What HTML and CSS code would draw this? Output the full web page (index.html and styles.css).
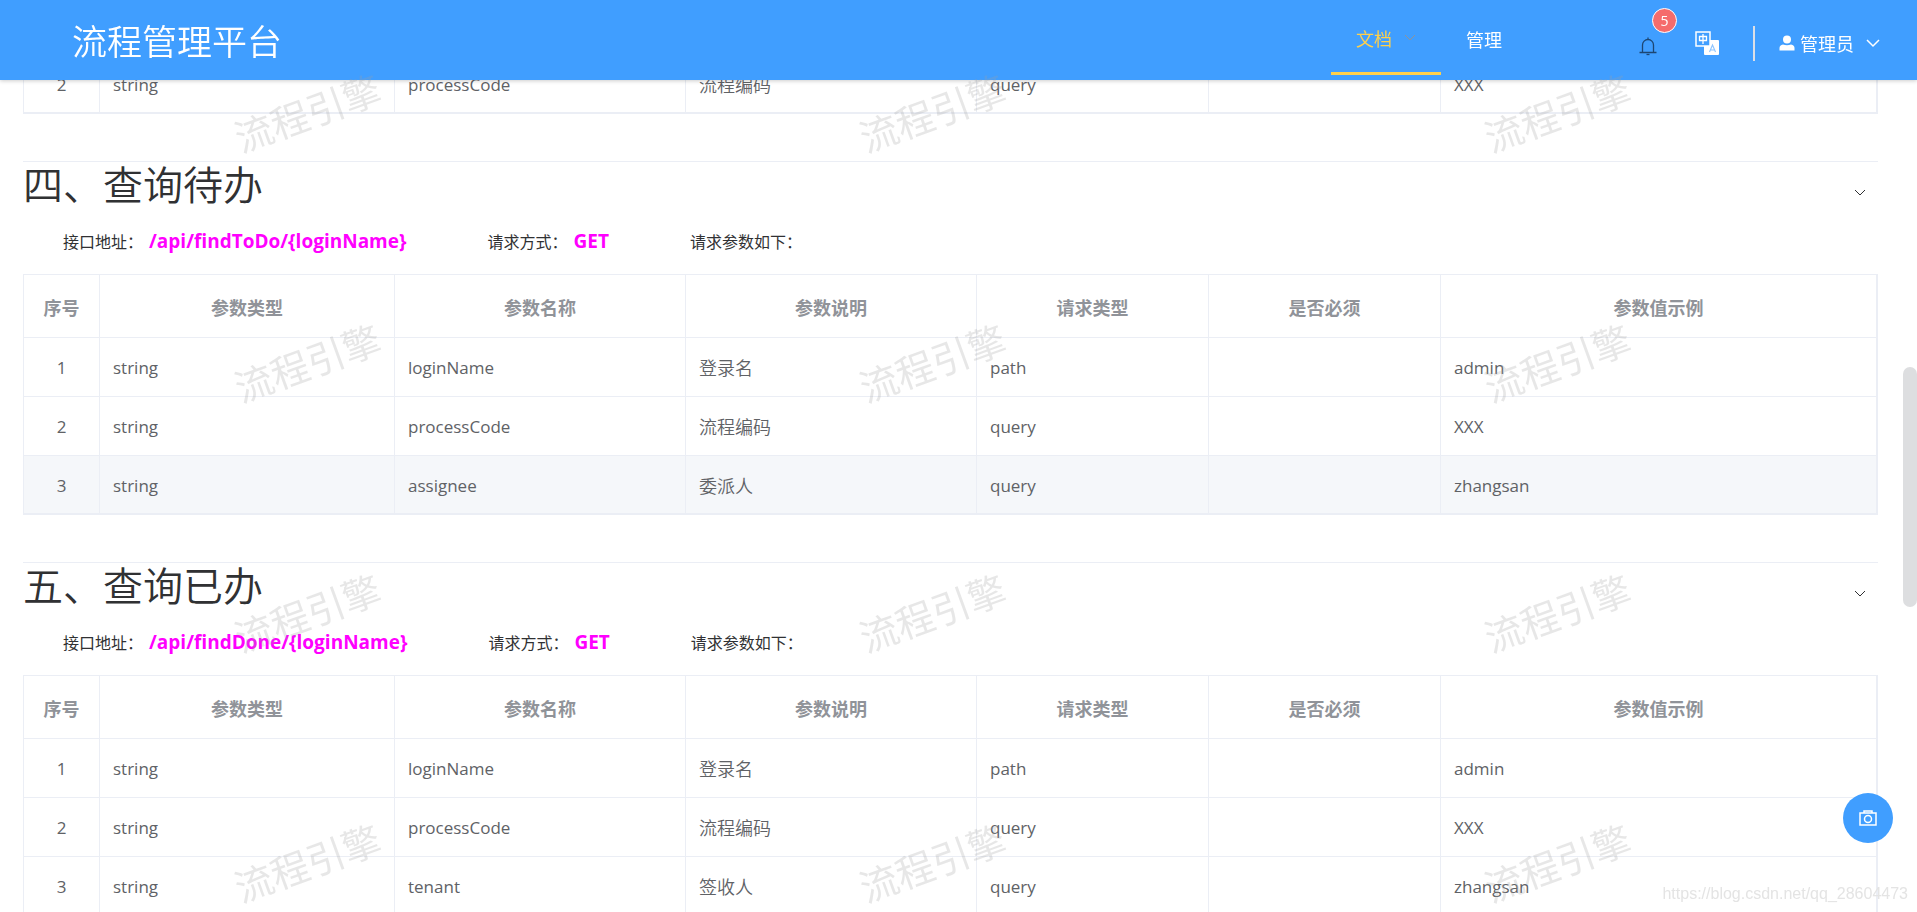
FILE: index.html
```html
<!DOCTYPE html>
<html lang="zh-CN">
<head>
<meta charset="utf-8">
<title>流程管理平台</title>
<link rel="stylesheet" href="styles.css">
</head>
<body>
<header class="topbar">
  <div class="brand">流程管理平台</div>
  <nav class="menu">
    <a class="menu-item active" href="#docs">文档
      <svg class="caret" viewBox="0 0 12 8"><path d="M1 1l5 5 5-5"/></svg>
    </a>
    <a class="menu-item" href="#manage">管理</a>
  </nav>
  <div class="tools">
    <button class="bell" aria-label="通知">
      <svg viewBox="0 0 18 20"><path d="M3.500 16V9a5.500 5.500 0 0 1 11 0v7M.5 16.500h17M9 1.500v2"/><path d="M7.500 18.500h3"/></svg>
      <span class="badge">5</span>
    </button>
    <button class="lang" aria-label="切换语言">
      <svg viewBox="0 0 24 24">
        <rect x="9" y="9" width="15" height="15" rx="1" fill="#fff"/>
        <rect x="1" y="1" width="14" height="14" fill="#409eff" stroke="#fff" stroke-width="1.500"/>
        <path d="M4.500 5.500h7v4h-7zM8 3v10" fill="none" stroke="#fff" stroke-width="1.300"/>
        <path d="M14.500 21l3-7 3 7M15.500 19h4" fill="none" stroke="#8cc4ff" stroke-width="1.100"/>
      </svg>
    </button>
    <button class="user">
      <svg class="person" viewBox="0 0 16 16"><circle cx="8" cy="4.500" r="4"/><path d="M.5 15.500v-2.500q0-3 3.500-3.500 4 1.300 8 0 3.500.5 3.500 3.500v2.500z"/></svg>
      <span>管理员</span>
      <svg class="caret light" viewBox="0 0 14 9"><path d="M1 1l6 6 6-6"/></svg>
    </button>
  </div>
</header>

<main class="page">
  <table class="params">
    <colgroup><col class="c-no"><col class="c-type"><col class="c-name"><col class="c-name"><col class="c-req"><col class="c-req"><col></colgroup>
    <tbody>
      <tr><td>2</td><td>string</td><td>processCode</td><td class="zh">流程编码</td><td>query</td><td></td><td>XXX</td></tr>
    </tbody>
  </table>

  <section class="api">
    <div class="api-head"><h2>四、查询待办</h2><button class="toggle" aria-label="折叠"><svg viewBox="0 0 12 8"><path d="M1 1l5 5 5-5"/></svg></button></div>
    <div class="info">
      <span>接口地址：<b>/api/findToDo/{loginName}</b></span>
      <span>请求方式：<b>GET</b></span>
      <span>请求参数如下：</span>
    </div>
    <table class="params">
      <colgroup><col class="c-no"><col class="c-type"><col class="c-name"><col class="c-name"><col class="c-req"><col class="c-req"><col></colgroup>
      <thead><tr><th>序号</th><th>参数类型</th><th>参数名称</th><th>参数说明</th><th>请求类型</th><th>是否必须</th><th>参数值示例</th></tr></thead>
      <tbody>
        <tr><td>1</td><td>string</td><td>loginName</td><td class="zh">登录名</td><td>path</td><td></td><td>admin</td></tr>
        <tr><td>2</td><td>string</td><td>processCode</td><td class="zh">流程编码</td><td>query</td><td></td><td>XXX</td></tr>
        <tr class="hover"><td>3</td><td>string</td><td>assignee</td><td class="zh">委派人</td><td>query</td><td></td><td>zhangsan</td></tr>
      </tbody>
    </table>
  </section>

  <section class="api">
    <div class="api-head"><h2>五、查询已办</h2><button class="toggle" aria-label="折叠"><svg viewBox="0 0 12 8"><path d="M1 1l5 5 5-5"/></svg></button></div>
    <div class="info">
      <span>接口地址：<b>/api/findDone/{loginName}</b></span>
      <span>请求方式：<b>GET</b></span>
      <span>请求参数如下：</span>
    </div>
    <table class="params">
      <colgroup><col class="c-no"><col class="c-type"><col class="c-name"><col class="c-name"><col class="c-req"><col class="c-req"><col></colgroup>
      <thead><tr><th>序号</th><th>参数类型</th><th>参数名称</th><th>参数说明</th><th>请求类型</th><th>是否必须</th><th>参数值示例</th></tr></thead>
      <tbody>
        <tr><td>1</td><td>string</td><td>loginName</td><td class="zh">登录名</td><td>path</td><td></td><td>admin</td></tr>
        <tr><td>2</td><td>string</td><td>processCode</td><td class="zh">流程编码</td><td>query</td><td></td><td>XXX</td></tr>
        <tr><td>3</td><td>string</td><td>tenant</td><td class="zh">签收人</td><td>query</td><td></td><td>zhangsan</td></tr>
      </tbody>
    </table>
  </section>
</main>

<div class="watermarks" aria-hidden="true">
  <span>流程引擎</span><span>流程引擎</span><span>流程引擎</span>
  <span>流程引擎</span><span>流程引擎</span><span>流程引擎</span>
  <span>流程引擎</span><span>流程引擎</span><span>流程引擎</span>
  <span>流程引擎</span><span>流程引擎</span><span>流程引擎</span>
</div>

<div class="scroll-thumb"></div>
<button class="shot" aria-label="截图">
  <svg viewBox="0 0 18 16"><path d="M1 3h16v12H1zM5 2.500V1h8v1.500"/><circle cx="9" cy="9" r="3.500"/></svg>
</button>
<div class="credit">https://blog.csdn.net/qq_28604473</div>
</body>
</html>
```
FILE: styles.css
```css
* { box-sizing: border-box; }
body {
  margin: 0;
  height: 100vh;
  overflow: hidden;
  background: #fff;
  color: #303133;
  font-family: "Open Sans", "Noto Sans CJK SC", sans-serif;
  font-size: 16px;
}
button { border: 0; padding: 0; background: none; font: inherit; color: inherit; cursor: pointer; }
svg { display: block; fill: none; stroke: currentColor; }

.topbar {
  position: fixed;
  inset: 0 0 auto 0;
  z-index: 2;
  height: 80px;
  display: flex;
  align-items: center;
  padding: 0 37px 0 72px;
  background: #409eff;
  color: #fff;
  box-shadow: 0 1px 4px rgba(0, 0, 0, .2);
  font-size: 18px;
}
.brand { font-size: 35px; line-height: 80px; font-weight: 350; margin-right: auto; padding-top: 4px; }
.menu { display: flex; height: 75px; align-self: flex-start; }
.menu-item {
  display: flex;
  align-items: center;
  gap: 12px;
  padding: 3px 25px 0;
  color: #fff;
  text-decoration: none;
  border-bottom: 3px solid transparent;
}
.menu-item + .menu-item { padding-top: 6px; }
.menu-item.active { color: #ffd04b; border-bottom-color: #ffd04b; }
.caret { width: 12px; height: 8px; color: #909399; }
.caret.light { width: 14px; height: 9px; color: #fff; margin-left: 7px; stroke-width: 1.500; }
.tools { display: flex; align-items: center; margin-left: 112px; }
.bell { position: relative; padding-top: 12px; color: #1d4672; }
.bell svg { width: 18px; height: 20px; stroke-width: 1.300; }
.badge {
  position: absolute;
  left: 13px;
  top: -16px;
  width: 25px;
  height: 25px;
  border: 1px solid #fff;
  border-radius: 50%;
  background: #f56c6c;
  color: #fff;
  font-size: 14px;
  line-height: 23px;
}
.lang { margin-left: 38px; padding-top: 5px; }
.lang svg { width: 24px; height: 24px; stroke: none; }
.user {
  display: flex;
  align-items: center;
  gap: 5px;
  margin-left: 34px;
  padding-left: 24px;
  height: 35px;
  margin-top: 6px;
  border-left: 2px solid #dcdfe6;
}
.person { width: 16px; height: 16px; fill: #fff; stroke: none; }

.page { padding: 55px 39px 0 23px; }
.params {
  width: 100%;
  margin-bottom: 47px;
  table-layout: fixed;
  border-collapse: separate;
  border-spacing: 0;
  border: solid #ebeef5;
  border-width: 0 1px 0 1px;
  color: #606266;
  font-size: 17px;
}
.c-no { width: 76px; }
.c-type { width: 295px; }
.c-name { width: 291px; }
.c-req { width: 232px; }
.params th, .params td {
  padding: 0 13px;
  border: solid #ebeef5;
  border-width: 0 1px 1px 0;
}
.params th { height: 64px; padding-top: 2px; border-top-width: 1px; color: #909399; font-size: 18px; font-weight: 700; }
.params td { height: 59px; padding-top: 2px; line-height: 24px; }
.params td:first-child { text-align: center; }
.params .zh { font-size: 18px; font-weight: 350; }
.params tr:last-child td { border-bottom-width: 2px; }
.params thead tr:last-child th { border-bottom-width: 1px; }
.hover td { background: #f5f7fa; }

.api { border-top: 1px solid #ebeef5; }
.api-head { display: flex; align-items: center; justify-content: space-between; height: 46px; }
.api-head h2 { margin: 0; font-size: 40px; line-height: 46px; font-weight: 350; }
.toggle { padding: 16px 12px 0 0; }
.toggle svg { width: 12px; height: 8px; }
.info { display: flex; align-items: center; gap: 81px; height: 66px; padding-left: 40px; }
.info b { margin-left: 6px; color: #f0f; font-size: 19px; font-weight: 700; }

.watermarks {
  position: fixed;
  z-index: 3;
  left: -5px;
  top: -14px;
  display: grid;
  grid-template-columns: repeat(3, 625px);
  grid-auto-rows: 250px;
  place-items: center;
  pointer-events: none;
  color: rgba(160, 160, 160, .25);
  font-size: 38px;
}
.watermarks span { transform: rotate(-20deg); }

.scroll-thumb {
  position: fixed;
  right: 0;
  top: 367px;
  width: 14px;
  height: 240px;
  border-radius: 7px;
  background: #dddee0;
}
.shot {
  position: fixed;
  right: 24px;
  bottom: 69px;
  z-index: 4;
  width: 50px;
  height: 50px;
  display: grid;
  place-items: center;
  border-radius: 50%;
  background: #409eff;
  color: #fff;
}
.shot svg { width: 18px; height: 16px; stroke-width: 1.500; }
.credit {
  position: fixed;
  right: 9px;
  bottom: 9px;
  z-index: 3;
  color: #e4e4e4;
  font: 16px "Liberation Sans", sans-serif;
}
```
